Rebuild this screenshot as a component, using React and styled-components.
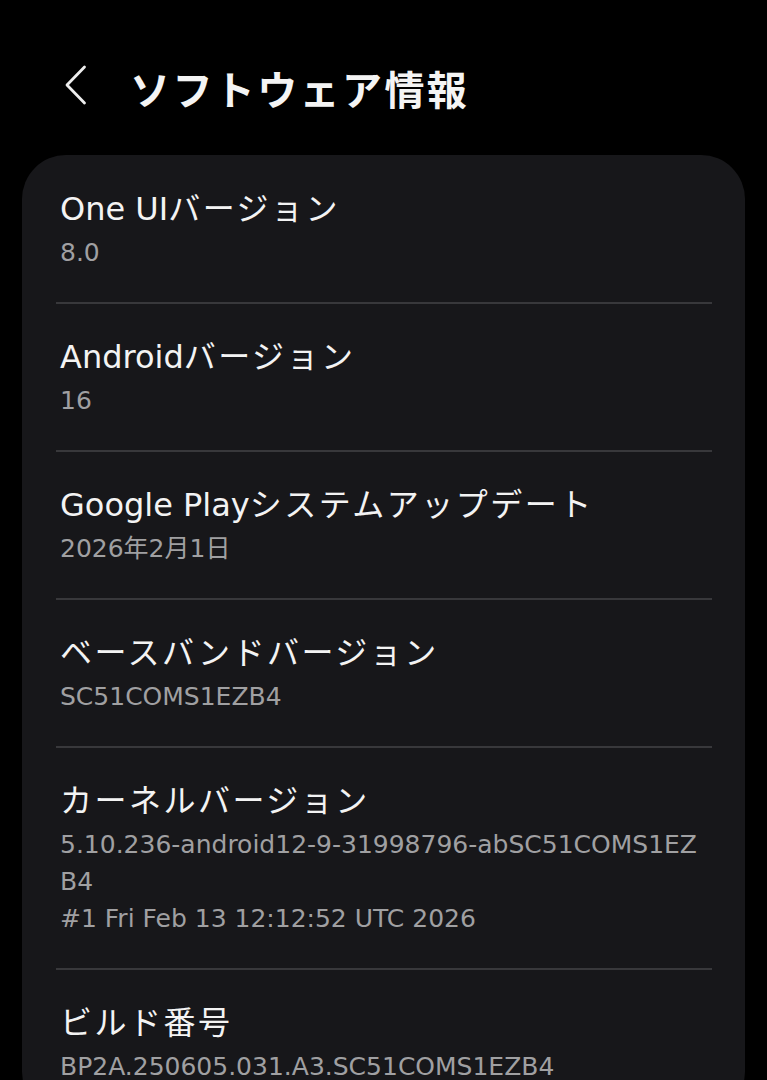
import React from 'react';
import styled, { createGlobalStyle } from 'styled-components';

const GlobalStyle = createGlobalStyle`
    html, body {
        margin: 0;
        padding: 0;
        background: #000;
    }
    body {
        font-family: "DejaVu Sans", "Noto Sans CJK JP", sans-serif;
        -webkit-font-smoothing: antialiased;
    }
`

const Page = styled.div`
    width: 767px;
    min-height: 1080px;
    background: #000;
    overflow: hidden;
`

// 上部のタイトルバー
const Header = styled.header`
    display: flex;
    align-items: center;
    height: 50px;
    padding: 63px 0 42px 64px;
`

const BackButton = styled.button`
    display: flex;
    align-items: center;
    justify-content: center;
    width: 24px;
    height: 40px;
    margin: -6px 42px 0 0;
    padding: 0;
    border: none;
    background: none;
    color: #ededed;
    cursor: pointer;
`

const Title = styled.h1`
    margin: 0;
    font-family: "Noto Sans CJK JP", sans-serif;
    font-size: 40px;
    font-weight: 700;
    letter-spacing: 2.4px;
    line-height: 50px;
    color: #f4f4f4;
`

// 情報カード
const Card = styled.section`
    margin: 0 22px;
    padding-top: 1px;
    background: #17171a;
    border-radius: 44px;
`

const Row = styled.div`
    display: flex;
    flex-direction: column;
    margin: 0 33px 0 34px;
    padding: 33px 0 31px 4px;
    border-bottom: ${props => (props.$last ? 'none' : '2px solid #38383b')};
`

const RowTitle = styled.div`
    font-size: 32px;
    line-height: 40px;
    color: #f3f3f3;
`

const RowValue = styled.div`
    margin-top: 5px;
    font-size: 25px;
    line-height: 37px;
    color: #a0a0a2;
`

const Kana = styled.span`
    letter-spacing: ${props => props.$ls}px;
`

// 日本語の部分だけ字間を広げる
function Mixed({ text, ls }) {
    return text.split(/([\u3000-\u30ff\u4e00-\u9fff]+)/).map((part, i) =>
        i % 2 ? <Kana key={i} $ls={ls}>{part}</Kana> : part
    );
}

const items = [
    { title: 'One UIバージョン', value: ['8.0'] },
    { title: 'Androidバージョン', value: ['16'] },
    { title: 'Google Playシステムアップデート', value: ['2026年2月1日'] },
    { title: 'ベースバンドバージョン', value: ['SC51COMS1EZB4'] },
    {
        title: 'カーネルバージョン',
        value: ['5.10.236-android12-9-31998796-abSC51COMS1EZ', 'B4', '#1 Fri Feb 13 12:12:52 UTC 2026'],
    },
    { title: 'ビルド番号', value: ['BP2A.250605.031.A3.SC51COMS1EZB4'] },
];

export default function App() {
    return (
        <Page>
            <GlobalStyle />
            <Header>
                <BackButton aria-label="戻る">
                    <svg width="22" height="40" viewBox="0 0 22 40" fill="none">
                        <polyline points="19.5,2 2,20 19.5,38" stroke="currentColor" strokeWidth="2.8" strokeLinecap="round" strokeLinejoin="round" />
                    </svg>
                </BackButton>
                <Title>ソフトウェア情報</Title>
            </Header>

            <Card>
                {items.map((item, index) => (
                    <Row key={item.title} $last={index === items.length - 1}>
                        <RowTitle><Mixed text={item.title} ls={2.5} /></RowTitle>
                        <RowValue>
                            {item.value.map(line => <div key={line}>{line}</div>)}
                        </RowValue>
                    </Row>
                ))}
            </Card>
        </Page>
    );
}
